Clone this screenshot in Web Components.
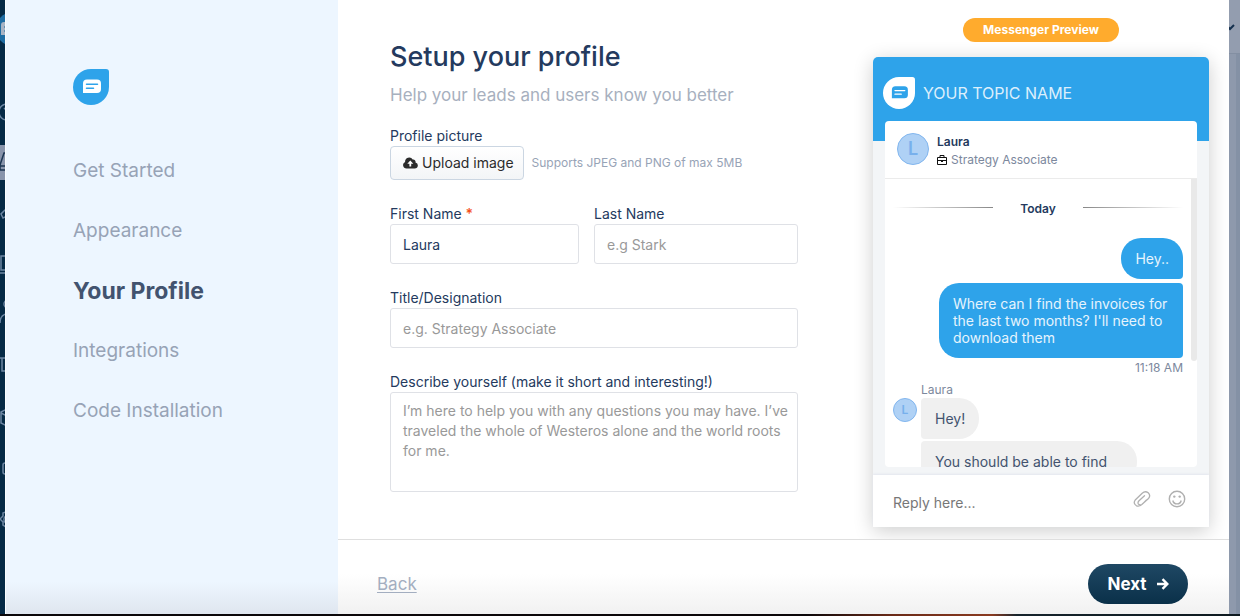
<!DOCTYPE html>
<html lang="en">
<head>
<meta charset="utf-8">
<meta name="viewport" content="width=device-width, initial-scale=1">
<title>Setup your profile</title>
<style>
    body {
        margin: 0;
        font-family: Inter, "Liberation Sans", sans-serif;
        font-size: 14px;
        line-height: 20px;
        color: #243a5e;
        --blue: #2ea3ea;
        --muted: #97a3b6;
    }
</style>
</head>
<body>
<setup-page>
    <app-rail slot="rail"></app-rail>
    <setup-steps slot="steps" current="Your Profile"></setup-steps>
    <profile-form slot="form"></profile-form>
    <messenger-preview slot="preview" topic="YOUR TOPIC NAME" name="Laura" role-name="Strategy Associate">
        <chat-bubble side="right">Hey..</chat-bubble>
        <chat-bubble side="right">Where can I find the invoices for the last two months? I'll need to download them</chat-bubble>
        <chat-bubble slot="replies" side="left">Hey!</chat-bubble>
        <chat-bubble slot="replies" side="left" class="wide">You should be able to find</chat-bubble>
    </messenger-preview>
    <setup-footer slot="footer"></setup-footer>
</setup-page>

<script>
class SetupPage extends HTMLElement {
    constructor() {
        super();
        this.attachShadow({ mode: 'open' });
        this.shadowRoot.innerHTML = `
        <style>
        :host {
            display: flex;
            flex-direction: column;
            min-height: 100vh;
        }
        .columns {
            flex: 1;
            display: flex;
        }
        main {
            flex: 1;
            display: flex;
            flex-direction: column;
            background: #fff;
        }
        .work {
            flex: 1;
            display: flex;
            justify-content: space-between;
            align-items: flex-start;
            gap: 24px;
            padding: 18px 20px 12px 52px;
        }
        .behind {
            width: 11px;
            background: linear-gradient(90deg, #8e99ac 7px, #8491a5 7px);
        }
        .behind div {
            height: 53px;
            background: #939daf;
            border-bottom: 1px solid #838fa2;
        }
        .behind svg {
            display: block;
        }
        .desk {
            height: 2px;
            background: linear-gradient(90deg, #0b0709 65%, #6b2a17 72%, #8a3a20 80%, #16242c 82%, #0e1a20);
        }
        </style>
        <div class="columns">
            <slot name="rail"></slot>
            <slot name="steps"></slot>
            <main>
                <div class="work">
                    <slot name="form"></slot>
                    <slot name="preview"></slot>
                </div>
                <slot name="footer"></slot>
            </main>
            <div class="behind">
                <div><svg width="11" height="53" fill="none" stroke="#14304e" stroke-width="2"><path d="M-2 26l3 3 4-4"/></svg></div>
            </div>
        </div>
        <div class="desk"></div>
        `
    }
}

class AppRail extends HTMLElement {
    constructor() {
        super();
        this.attachShadow({ mode: 'open' });
        const icons = [
            '<circle cx="7" cy="26" r="8"/><path d="M4 22l3 3"/>',
            '<path d="M-1 29h8M0 33V28l4-12h6M0 33h8" stroke="#1b3552"/>',
            '<path d="M7 20L1 26l2 4 4-2"/>',
            '<path d="M7 17H1v14h6M-1 34h8"/>',
            '<circle cx="8" cy="14" r="4"/><path d="M0 33c0-5 2-8 6-9"/>',
            '<path d="M-1 17h8M2 17v13h6"/>',
            '<path d="M7 17L1 20v11l6 3M1 21l6 3"/>',
            '<rect x="3" y="20" width="9" height="11" rx="2"/>',
            '<path d="M6 18l-3 1v3l-3 3 3 3v3l3 2M6 22a4 4 0 000 7"/>'
        ]
        this.shadowRoot.innerHTML = `
        <style>
        :host {
            display: flex;
            flex-direction: column;
            width: 5px;
            background: #052a46;
        }
        svg {
            display: block;
            flex: none;
        }
        .active {
            background: linear-gradient(#052a46 8px, #8894ab 8px 43px, #052a46 43px);
        }
        </style>
        <svg width="5" height="86">
            <circle cx="13" cy="29" r="17" fill="#1f6da3"/>
            <path d="M6 22H4q-3 0-3 3v10h5z" fill="#a9b4c4"/>
            <path d="M4 27h2M4 31h2" stroke="#1f6da3"/>
        </svg>
        ${icons.map((icon, i) => `<svg class="${i === 1 ? 'active' : ''}" width="5" height="51" fill="none" stroke="#6c86a3" stroke-width="1.5">${icon}</svg>`).join('')}
        `
    }
}

class BrandMark extends HTMLElement {
    constructor() {
        super();
        this.attachShadow({ mode: 'open' });
        this.shadowRoot.innerHTML = `
        <style>
        :host {
            display: block;
            flex: none;
            width: var(--size, 36px);
            height: var(--size, 36px);
        }
        svg {
            display: block;
            width: 100%;
            height: 100%;
        }
        </style>
        <svg viewBox="0 0 36 36">
            <path d="M18 0H33q3 0 3 3V18A18 18 0 1 1 18 0z" fill="var(--leaf, #2ea3ea)"/>
            <path d="M14 10.500h10q4 0 4 4v5.500q0 4-4 4H10v-9.500q0-4 4-4z" fill="var(--note, #fff)"/>
            <path d="M13.500 15.300h11M13.500 19.300h7" stroke="var(--leaf, #2ea3ea)" stroke-width="1.500" stroke-linecap="round"/>
        </svg>
        `
    }
}

class InitialAvatar extends HTMLElement {
    constructor() {
        super();
        this.attachShadow({ mode: 'open' });
        this.shadowRoot.innerHTML = `
        <style>
        :host {
            display: flex;
            flex: none;
            align-items: center;
            justify-content: center;
            box-sizing: border-box;
            width: 32px;
            height: 32px;
            border: 1px solid #82b6ee;
            border-radius: 50%;
            background: #afd1f5;
            color: #77b0ec;
            font-size: 18px;
            font-weight: 600;
        }
        :host([small]) {
            width: 24px;
            height: 24px;
            font-size: 12px;
        }
        </style>
        <slot></slot>
        `
    }
}

class SetupSteps extends HTMLElement {
    constructor() {
        super();
        this.attachShadow({ mode: 'open' });
        const steps = ['Get Started', 'Appearance', 'Your Profile', 'Integrations', 'Code Installation']
        const current = this.getAttribute('current')
        this.shadowRoot.innerHTML = `
        <style>
        :host {
            box-sizing: border-box;
            display: block;
            flex: none;
            width: 333px;
            padding: 69px 24px 0 67px;
            border-left: 1px solid #fafdff;
            background: linear-gradient(0deg, #dfe6ef, #edf6ff 32px);
        }
        nav {
            display: flex;
            flex-direction: column;
            margin-top: 36px;
        }
        a {
            color: var(--muted);
            font-size: 19px;
            line-height: 60px;
            text-decoration: none;
        }
        a[aria-current] {
            color: #42536f;
            font-size: 23px;
            font-weight: 700;
        }
        </style>
        <brand-mark></brand-mark>
        <nav>
            ${steps.map(step => `<a href="#"${step === current ? ' aria-current="step"' : ''}>${step}</a>`).join('')}
        </nav>
        `
    }
}

class FormField extends HTMLElement {
    constructor() {
        super();
        this.attachShadow({ mode: 'open' });
        const label = this.getAttribute('label')
        const hint = this.getAttribute('placeholder') || ''
        const value = this.getAttribute('value') || ''
        const control = this.hasAttribute('multiline')
            ? `<textarea id="control" placeholder="${hint}">${value}</textarea>`
            : `<input id="control" type="text" placeholder="${hint}" value="${value}">`
        this.shadowRoot.innerHTML = `
        <style>
        :host {
            display: block;
        }
        label {
            display: block;
        }
        label span {
            color: #f4511e;
            font-weight: 600;
        }
        input, textarea {
            box-sizing: border-box;
            display: block;
            width: 100%;
            height: 40px;
            margin: 0;
            padding: 8px 6px 8px 12px;
            border: 1px solid #dfe1e6;
            border-radius: 3px;
            background: #fff;
            color: inherit;
            font: inherit;
            line-height: 20px;
            outline: none;
        }
        textarea {
            height: 100px;
            resize: none;
        }
        ::placeholder {
            color: #999;
            opacity: 1;
        }
        </style>
        <label for="control">${label}${this.hasAttribute('required') ? ' <span>*</span>' : ''}</label>
        ${control}
        `
    }
}

class ProfileForm extends HTMLElement {
    constructor() {
        super();
        this.attachShadow({ mode: 'open' });
        this.shadowRoot.innerHTML = `
        <style>
        :host {
            display: block;
            flex: 0 1 408px;
            padding-top: 21px;
        }
        h1 {
            margin: 0;
            font-size: 27px;
            font-weight: 500;
            line-height: 36px;
        }
        h1 + p {
            margin: 8px 0 19px;
            color: #a7b0be;
            font-size: 17px;
            line-height: 24px;
        }
        form {
            display: flex;
            flex-direction: column;
            gap: 24px;
        }
        .names {
            display: grid;
            grid-template-columns: 189fr 204fr;
            gap: 15px;
        }
        .picture label {
            display: block;
        }
        .upload {
            display: flex;
            align-items: center;
            gap: 8px;
        }
        button {
            display: flex;
            align-items: center;
            gap: 4px;
            height: 34px;
            padding: 0 9px 0 12px;
            border: 1px solid #cbd6e2;
            border-radius: 4px;
            background: linear-gradient(#fff, #f3f5f7);
            color: #2b2b2b;
            font: inherit;
            white-space: nowrap;
        }
        small {
            color: var(--muted);
            font-size: 12px;
        }
        </style>
        <h1>Setup your profile</h1>
        <p>Help your leads and users know you better</p>
        <form>
            <div class="picture">
                <label for="upload">Profile picture</label>
                <div class="upload">
                    <button id="upload" type="button">
                        <svg width="15" height="12" viewBox="0 0 15 12">
                            <path d="M3.500 11.500A3.400 3.400 0 0 1 2.100 5 4.100 4.100 0 0 1 9.700 2.600 2.300 2.300 0 0 1 12.500 5.400 3.100 3.100 0 0 1 11.800 11.500z" fill="#2b2b2b"/>
                            <path d="M7.300 3.500l3 3.200H8.200v2.900H6.400V6.700H4.300z" fill="#fff"/>
                        </svg>
                        Upload image
                    </button>
                    <small>Supports JPEG and PNG of max 5MB</small>
                </div>
            </div>
            <div class="names">
                <form-field label="First Name" value="Laura" required></form-field>
                <form-field label="Last Name" placeholder="e.g Stark"></form-field>
            </div>
            <form-field label="Title/Designation" placeholder="e.g. Strategy Associate"></form-field>
            <form-field label="Describe yourself (make it short and interesting!)" multiline placeholder="I’m here to help you with any questions you may have. I’ve traveled the whole of Westeros alone and the world roots for me."></form-field>
        </form>
        `
    }
}

class ChatBubble extends HTMLElement {
    constructor() {
        super();
        this.attachShadow({ mode: 'open' });
        this.shadowRoot.innerHTML = `
        <style>
        :host {
            box-sizing: border-box;
            display: block;
            max-width: 244px;
            padding: 12px 14px;
            background: #f0f0f0;
            color: #42536f;
            line-height: 17px;
        }
        :host([side="left"]) {
            border-radius: 4px 20px 20px 4px;
        }
        :host([side="right"]) {
            border-radius: 20px 4px 4px 20px;
            background: var(--blue);
            color: #e6f4fd;
        }
        :host([side="right"]:first-of-type) {
            border-top-right-radius: 20px;
        }
        :host(.wide) {
            width: 216px;
        }
        </style>
        <slot></slot>
        `
    }
}

class MessengerPreview extends HTMLElement {
    constructor() {
        super();
        this.attachShadow({ mode: 'open' });
        const name = this.getAttribute('name')
        this.shadowRoot.innerHTML = `
        <style>
        :host {
            display: flex;
            flex: none;
            flex-direction: column;
            align-items: center;
            gap: 15px;
            width: 336px;
        }
        .tag {
            padding: 0 20px;
            border-radius: 12px;
            background: #ffab2d;
            color: #fff;
            font-size: 12px;
            font-weight: 700;
            line-height: 24px;
        }
        .card {
            width: 100%;
            border-radius: 5px 5px 0 0;
            background: linear-gradient(var(--blue) 84px, #f3f5f7 84px);
            box-shadow: 0 4px 20px rgba(0, 0, 0, .2);
        }
        header {
            display: flex;
            align-items: center;
            gap: 8px;
            padding: 20px 10px 12px;
            color: #dceffc;
            font-size: 16px;
        }
        header brand-mark {
            --size: 32px;
            --leaf: #fff;
            --note: #2ea3ea;
        }
        .panel {
            margin: 0 12px 8px;
            border-radius: 4px;
            background: #fff;
            overflow: hidden;
        }
        .agent {
            display: flex;
            gap: 8px;
            padding: 12px 12px 9px;
            border-bottom: 1px solid #ebebeb;
            font-size: 12px;
            line-height: 18px;
        }
        .agent b {
            display: block;
            font-weight: 600;
        }
        .role {
            display: flex;
            align-items: center;
            gap: 4px;
            color: #7c889d;
        }
        .scroll {
            display: flex;
            height: 288px;
            overflow: hidden;
        }
        .thumb {
            width: 6px;
            height: 182px;
            border-radius: 0 0 3px 3px;
            background: #e9e9e9;
        }
        .chat {
            flex: 1;
            padding: 20px 8px 0;
        }
        .day {
            display: flex;
            align-items: center;
            justify-content: space-between;
            margin-bottom: 19px;
            font-size: 12px;
            font-weight: 600;
        }
        .day::before, .day::after {
            content: "";
            width: 100px;
            height: 1px;
            margin-bottom: 4px;
            background: linear-gradient(90deg, transparent, #888);
        }
        .day::after {
            background: linear-gradient(270deg, transparent, #888);
        }
        .sent {
            display: flex;
            flex-direction: column;
            align-items: flex-end;
            gap: 4px;
        }
        time, .from {
            color: #7c889d;
            font-size: 12px;
            line-height: 12px;
        }
        .received {
            display: grid;
            grid-template-columns: 24px 1fr;
            gap: 2px 4px;
            margin-top: 10px;
        }
        .from {
            grid-column: 2;
        }
        .replies {
            display: flex;
            flex-direction: column;
            align-items: flex-start;
            gap: 2px;
        }
        .reply {
            display: flex;
            align-items: center;
            gap: 16px;
            height: 52px;
            padding: 0 23px 0 20px;
            background: #fff;
            box-shadow: 0 -1px 2px #e4e6ee;
        }
        .reply input {
            flex: 1;
            min-width: 0;
            padding: 4px 0 0;
            border: 0;
            outline: none;
            background: none;
            font: inherit;
        }
        .reply input::placeholder {
            color: #777;
            opacity: 1;
        }
        .reply button {
            padding: 0 0 4px;
            border: 0;
            background: none;
        }
        .reply svg {
            display: block;
        }
        </style>
        <div class="tag">Messenger Preview</div>
        <div class="card">
            <header><brand-mark></brand-mark>${this.getAttribute('topic')}</header>
            <div class="panel">
                <div class="agent">
                    <initial-avatar>${name[0]}</initial-avatar>
                    <div>
                        <b>${name}</b>
                        <span class="role">
                            <svg width="10" height="10" fill="none" stroke="#111"><path d="M.5 2.500h9v7h-9zM3 2.500V.5h4v2M.5 5.500h9"/><path d="M4 6.500h2"/></svg>
                            ${this.getAttribute('role-name')}
                        </span>
                    </div>
                </div>
                <div class="scroll">
                    <div class="chat">
                        <div class="day">Today</div>
                        <div class="sent">
                            <slot></slot>
                            <time>11:18 AM</time>
                        </div>
                        <div class="received">
                            <span class="from">${name}</span>
                            <initial-avatar small>${name[0]}</initial-avatar>
                            <div class="replies"><slot name="replies"></slot></div>
                        </div>
                    </div>
                    <div class="thumb"></div>
                </div>
            </div>
            <div class="reply">
                <input type="text" placeholder="Reply here..." aria-label="Reply">
                <button type="button" aria-label="Attach a file">
                    <svg width="20" height="18" fill="none" stroke="#b0b0b0" stroke-width="1.300" stroke-linecap="round" stroke-linejoin="round">
                        <path d="M14.200 10.200L10.800 13.600Q7.800 17 4.500 15.800Q.800 13.500 3.200 10L10.200 3.200Q13.200.500 16.200 2.800Q19 5.500 16.500 8.500L9.800 14.500Q7.500 15.500 6.300 13.800Q5.500 12.500 7 10.800L12.500 5.800" />
                    </svg>
                </button>
                <button type="button" aria-label="Insert an emoji">
                    <svg width="18" height="18" fill="none" stroke="#b0b0b0" stroke-width="1.400">
                        <circle cx="9" cy="9" r="7.700"/>
                        <path d="M4.800 10.500a4.300 4.300 0 0 0 8.400 0"/>
                        <circle cx="6.300" cy="6.600" r="1.200" fill="#b0b0b0" stroke="none"/>
                        <circle cx="11.700" cy="6.600" r="1.200" fill="#b0b0b0" stroke="none"/>
                    </svg>
                </button>
            </div>
        </div>
        `
    }
}

class SetupFooter extends HTMLElement {
    constructor() {
        super();
        this.attachShadow({ mode: 'open' });
        this.shadowRoot.innerHTML = `
        <style>
        :host {
            display: flex;
            align-items: center;
            justify-content: space-between;
            padding: 24px 41px 10px 39px;
            border-top: 1px solid #dfdfdf;
            background: linear-gradient(0deg, #f1f1f1, #fff 40px);
        }
        a {
            color: #a3aec0;
            font-size: 17px;
            text-underline-offset: 2px;
        }
        button {
            display: flex;
            align-items: center;
            justify-content: center;
            gap: 10px;
            width: 100px;
            height: 40px;
            padding: 0;
            border: 0;
            border-radius: 20px;
            background: linear-gradient(#1f4864, #0a3049);
            color: #fff;
            font: inherit;
            font-size: 17px;
            font-weight: 700;
        }
        </style>
        <a href="#">Back</a>
        <button type="button">
            Next
            <svg width="12" height="12" fill="none" stroke="#fff" stroke-width="2.400"><path d="M0 6h10M5.500 1.200L10.300 6l-4.800 4.800"/></svg>
        </button>
        `
    }
}

customElements.define('brand-mark', BrandMark);
customElements.define('initial-avatar', InitialAvatar);
customElements.define('form-field', FormField);
customElements.define('chat-bubble', ChatBubble);
customElements.define('app-rail', AppRail);
customElements.define('setup-steps', SetupSteps);
customElements.define('profile-form', ProfileForm);
customElements.define('messenger-preview', MessengerPreview);
customElements.define('setup-footer', SetupFooter);
customElements.define('setup-page', SetupPage);
</script>
</body>
</html>
